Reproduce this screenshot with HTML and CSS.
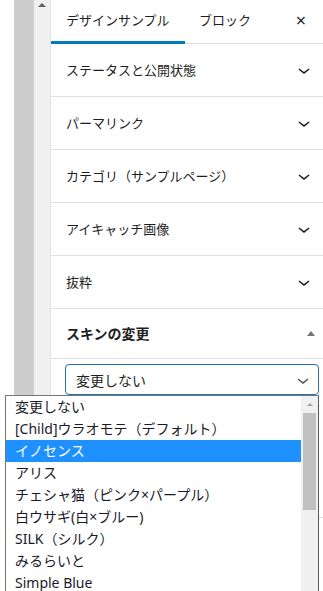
FILE: index.html
```html
<!DOCTYPE html>
<html lang="ja">
<head>
  <meta charset="UTF-8">
  <title>スキンの変更</title>
  <link rel="stylesheet" href="styles.css">
</head>
<body>

<div class="gutter"></div>
<div class="track"></div>
<div class="rail"><span class="rail-arrow"></span></div>

<div class="panel">
  <div class="tabs">
    <div class="tab active">デザインサンプル</div>
    <div class="tab">ブロック</div>
    <div class="close">×</div>
  </div>

  <div class="section">
    <span>ステータスと公開状態</span>
    <svg class="chevron" viewBox="0 0 24 24" width="24" height="24"><path d="M17.5 11.6L12 16l-5.5-4.4.9-1.2L12 14l4.6-3.6 1 1.2z"/></svg>
  </div>
  <div class="section">
    <span>パーマリンク</span>
    <svg class="chevron" viewBox="0 0 24 24" width="24" height="24"><path d="M17.5 11.6L12 16l-5.5-4.4.9-1.2L12 14l4.6-3.6 1 1.2z"/></svg>
  </div>
  <div class="section">
    <span>カテゴリ（サンプルページ）</span>
    <svg class="chevron" viewBox="0 0 24 24" width="24" height="24"><path d="M17.5 11.6L12 16l-5.5-4.4.9-1.2L12 14l4.6-3.6 1 1.2z"/></svg>
  </div>
  <div class="section">
    <span>アイキャッチ画像</span>
    <svg class="chevron" viewBox="0 0 24 24" width="24" height="24"><path d="M17.5 11.6L12 16l-5.5-4.4.9-1.2L12 14l4.6-3.6 1 1.2z"/></svg>
  </div>
  <div class="section">
    <span>抜粋</span>
    <svg class="chevron" viewBox="0 0 24 24" width="24" height="24"><path d="M17.5 11.6L12 16l-5.5-4.4.9-1.2L12 14l4.6-3.6 1 1.2z"/></svg>
  </div>

  <div class="section open">
    <span>スキンの変更</span>
    <span class="up"></span>
  </div>

  <div class="skin-body">
    <div class="select">
      <span>変更しない</span>
      <svg class="chevron small" viewBox="0 0 24 24" width="24" height="24"><path d="M17.5 11.6L12 16l-5.5-4.4.9-1.2L12 14l4.6-3.6 1 1.2z"/></svg>
    </div>
  </div>
</div>

<!-- open dropdown of the skin select -->
<div class="dropdown">
  <ul class="options">
    <li>変更しない</li>
    <li>[Child]ウラオモテ（デフォルト）</li>
    <li class="selected">イノセンス</li>
    <li>アリス</li>
    <li>チェシャ猫（ピンク×パープル）</li>
    <li>白ウサギ(白×ブルー)</li>
    <li>SILK（シルク）</li>
    <li>みるらいと</li>
    <li>Simple Blue</li>
  </ul>
  <div class="scroll">
    <span class="scroll-arrow"></span>
    <div class="thumb"></div>
  </div>
</div>

</body>
</html>
```

FILE: styles.css
```css
body {
  margin: 0;
  width: 323px;
  height: 591px;
  overflow: hidden;
  display: flex;
  background: #fff;
  font-family: "Noto Sans", "Noto Sans CJK JP", sans-serif;
  color: #1e1e1e;
}

.gutter {
  width: 14px;
  background: #fff;
}

.track {
  width: 20px;
  background: #cdcdcd;
}

.rail {
  width: 17px;
  background: #f0f0f0;
  border-right: 1px solid #e2e2e2;
  display: flex;
  justify-content: center;
  padding-top: 3px;
  box-sizing: border-box;
}

.rail-arrow {
  width: 0;
  height: 0;
  border-left: 4px solid transparent;
  border-right: 4px solid transparent;
  border-bottom: 4px solid #606060;
}

.panel {
  flex: 1;
  background: #fff;
}

.tabs {
  display: flex;
  align-items: stretch;
  height: 44px;
  border-bottom: 1px solid #ddd;
  box-sizing: border-box;
  font-size: 13px;
}

.tab {
  padding: 0 15px;
  line-height: 40px;
  color: #1e1e1e;
}

.tab.active {
  width: 134px;
  box-sizing: border-box;
  border-bottom: 3px solid #007cba;
  margin-bottom: -1px;
}

.tab + .tab {
  padding-left: 14px;
}

.close {
  margin-left: auto;
  width: 40px;
  text-align: center;
  font-size: 18px;
  line-height: 40px;
  padding-right: 2px;
}

.section {
  display: flex;
  align-items: center;
  justify-content: space-between;
  height: 53px;
  box-sizing: border-box;
  border-bottom: 1px solid #e0e0e0;
  padding: 0 7px 0 15px;
  font-size: 13px;
}

.section span {
  line-height: 20px;
}

.chevron {
  fill: #1e1e1e;
  flex: none;
}

.section.open {
  height: 50px;
  font-size: 14px;
  font-weight: bold;
  padding-right: 8px;
}

.up {
  width: 0;
  height: 0;
  border-left: 4px solid transparent;
  border-right: 4px solid transparent;
  border-bottom: 5px solid #757575;
  margin-right: 0;
}

.skin-body {
  padding: 5px 4px 122px 14px;
  border-bottom: 1px solid #e0e0e0;
}

.select {
  height: 31px;
  box-sizing: border-box;
  border: 1.5px solid #2271b1;
  border-radius: 4px;
  display: flex;
  align-items: center;
  justify-content: space-between;
  padding: 0 3px 0 10px;
  font-size: 14px;
}

.chevron.small {
  fill: #555;
}

.dropdown {
  position: absolute;
  left: 5px;
  top: 395px;
  width: 314px;
  height: 200px;
  box-sizing: border-box;
  border: 1px solid #767676;
  border-right-color: #5a5a5a;
  background: #fff;
  display: flex;
}

.options {
  list-style: none;
  margin: 0;
  padding: 0;
  flex: 1;
  font-size: 14px;
}

.options li {
  height: 22px;
  line-height: 22px;
  padding-left: 9px;
  color: #1a1a2a;
  white-space: nowrap;
}

.options li.selected {
  background: #1e90ff;
  color: #fff;
}

.scroll {
  width: 17px;
  background: #f0f0f0;
  display: flex;
  flex-direction: column;
  align-items: center;
  padding-top: 7px;
}

.scroll-arrow {
  width: 0;
  height: 0;
  border-left: 3px solid transparent;
  border-right: 3px solid transparent;
  border-bottom: 3px solid #a3a3a3;
}

.thumb {
  margin-top: 7px;
  width: 13px;
  height: 97px;
  background: #c1c1c1;
}
```
